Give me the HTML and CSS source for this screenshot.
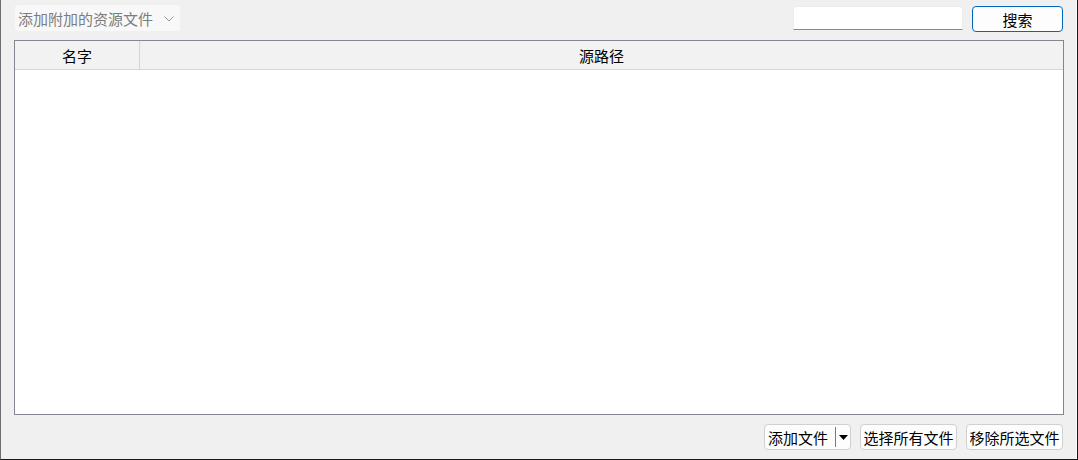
FILE: index.html
```html
<!DOCTYPE html>
<html lang="zh">
<head>
<meta charset="utf-8">
<link rel="stylesheet" href="styles.css">
</head>
<body>
<div class="window">
  <div class="toolbar">
    <div class="combo">
      <span class="combo-text">添加附加的资源文件</span>
      <svg class="chev" width="10" height="6" viewBox="0 0 10 6"><path d="M0.5 0.5 L5 5 L9.5 0.5" fill="none" stroke="#9a9a9a" stroke-width="1"/></svg>
    </div>
    <div class="spacer"></div>
    <div class="search-input"></div>
    <button class="btn btn-primary">搜索</button>
  </div>
  <div class="table">
    <div class="thead">
      <div class="th th-name">名字</div>
      <div class="th th-path">源路径</div>
    </div>
    <div class="tbody"></div>
  </div>
  <div class="footer">
    <div class="btn split">
      <span class="split-main">添加文件</span>
      <span class="split-arrow"><svg width="9" height="5" viewBox="0 0 9 5"><path d="M0 0 H9 L4.5 5 Z" fill="#000"/></svg></span>
    </div>
    <button class="btn">选择所有文件</button>
    <button class="btn">移除所选文件</button>
  </div>
</div>
</body>
</html>
```

FILE: styles.css
```css
* { box-sizing: border-box; }
html, body { margin: 0; padding: 0; }
body {
  font-family: "Noto Sans CJK SC", "Noto Sans", sans-serif;
  font-size: 15px;
  color: #000;
  background: #f0f0f0;
}
.window {
  width: 1078px;
  height: 460px;
  background: #f0f0f0;
  border-left: 1px solid #6e6e6e;
  border-right: 1px solid #1a1a1a;
  border-bottom: 1px solid #1a1a1a;
  box-shadow: inset -1px 0 0 #fafafa;
  padding: 5px 13px 9px 13px;
  display: flex;
  flex-direction: column;
}
.toolbar {
  display: flex;
  align-items: flex-start;
  height: 26px;
}
.combo {
  margin-left: 1px;
  width: 165px;
  height: 26px;
  background: #f8f8f8;
  border-radius: 3px;
  display: flex;
  align-items: center;
  padding-left: 3px;
}
.combo-text {
  color: #7d7d7d;
  line-height: 1;
  white-space: nowrap;
}
.chev { margin-left: 11px; margin-top: 1px; }
.spacer { flex: 1; }
.search-input {
  margin-top: 1px;
  width: 170px;
  height: 24px;
  background: #fff;
  border: 1px solid #ececec;
  border-bottom: 1px solid #8a8a8a;
  border-radius: 3px 3px 0 0;
}
.btn {
  font-family: inherit;
  font-size: 15px;
  color: #000;
  background: #fdfdfd;
  border: 1px solid #d0d0d0;
  border-radius: 4px;
  height: 26px;
  padding: 0;
  display: flex;
  align-items: center;
  justify-content: center;
  line-height: 1;
}
.btn-primary {
  margin-left: 9px;
  margin-top: 1px;
  margin-right: 1px;
  width: 91px;
  border: 1px solid #0067c0;
  background: #fdfdfd;
}
.table {
  margin-top: 9px;
  flex: 1;
  border: 1px solid #828790;
  background: #fff;
  display: flex;
  flex-direction: column;
}
.thead {
  display: flex;
  height: 29px;
  background: #f2f2f2;
  border-bottom: 1px solid #d5d5d5;
}
.th {
  display: flex;
  align-items: center;
  justify-content: center;
  line-height: 1;
  padding-top: 1px;
}
.th-name {
  width: 125px;
  border-right: 1px solid #d5d5d5;
}
.th-path { flex: 1; padding-left: 0; }
.tbody { flex: 1; background: #fff; }
.footer {
  margin-top: 9px;
  display: flex;
  justify-content: flex-end;
  gap: 9px;
  padding-right: 1px;
}
.footer .btn { width: 97px; }
.footer .split {
  width: 87px;
  justify-content: flex-start;
  align-items: stretch;
}
.split-main {
  display: flex;
  align-items: center;
  padding-left: 3px;
  width: 71px;
  border-right: 1px solid #7a7a7a;
  margin: 2px 0;
}
.split-arrow {
  flex: 1;
  display: flex;
  align-items: center;
  justify-content: center;
  padding-top: 1px;
}
```
